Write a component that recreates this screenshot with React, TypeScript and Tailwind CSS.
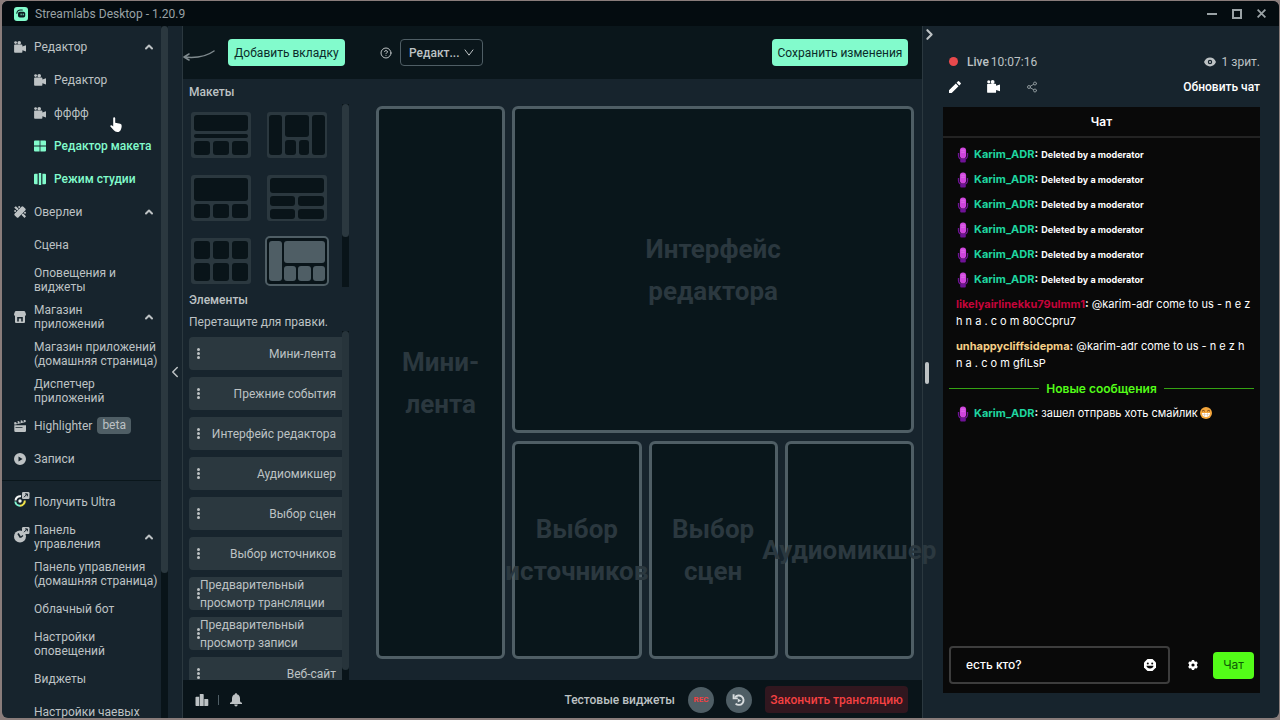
import { useState } from 'react';
import type { ReactNode } from 'react';
import { ChevronLeft, ChevronRight, ChevronUp, CircleHelp, Share2 } from 'lucide-react';

type IconProps = { className?: string };

// Icons
function CameraIcon({ className = 'size-3' }: IconProps) {
  return (
    <svg className={className} viewBox="0 0 12 12" fill="currentColor">
      <circle cx="1.6" cy="1.6" r="1.4" />
      <circle cx="5.2" cy="1.8" r="1.8" />
      <path d="M1 3.4h6.600q.8 0 .8.800v1.200L12 4.200v6.200L8.400 9.200v1.800q0 .8-.8.8H1q-.9 0-.9-.8V4.200q0-.8.9-.8z" />
    </svg>
  );
}

function GridIcon({ className = 'size-3' }: IconProps) {
  return (
    <svg className={className} viewBox="0 0 12 12" fill="currentColor">
      <path d="M1 .5h4.6v5H0V1.4Q0 .5 1 .5zM6.4.5H11q1 0 1 .9v4.1H6.4zM0 6.5h5.6v5H1q-1 0-1-.9zM6.4 6.5H12v4.1q0 .9-1 .9H6.4z" />
    </svg>
  );
}

function StudioIcon({ className = 'size-3' }: IconProps) {
  return (
    <svg className={className} viewBox="0 0 12 12" fill="currentColor">
      <path d="M1 .8h2.600v10.400H1q-1 0-1-1V1.8q0-1 1-1zM4.800 0h2.400v12H4.800zM8.400.8H11q1 0 1 1v8.400q0 1-1 1H8.400z" />
    </svg>
  );
}

function OverlaysIcon({ className = 'size-3' }: IconProps) {
  return (
    <svg className={className} viewBox="0 0 12 12" fill="currentColor">
      <path d="M7.400.8q1-1 2 0l1.800 1.800q1 1 0 2l-6.600 6.600q-1 1-2 0L.8 9.400q-1-1 0-2z" />
      <path d="M.2 1.600 1.900.2 4.800 3 3.200 4.600zM7.400 8.800l1.600-1.500 3 3-1.500 1.600z" />
      <circle cx="1.100" cy="5" r="1" />
      <circle cx="5.200" cy="1" r="1" />
      <circle cx="11" cy="6.800" r="1" />
    </svg>
  );
}

function StoreIcon({ className = 'size-3' }: IconProps) {
  return (
    <svg className={className} viewBox="0 0 12 12" fill="currentColor">
      <path
        fillRule="evenodd"
        d="M2 0h8q.8 0 1.100.8L12 3.200q0 1.400-1 1.700v6q0 1.100-1.100 1.100H2.100Q1 12 1 10.900v-6Q0 4.600 0 3.200L.9.800Q1.200 0 2 0zM3.200 6v4.500h1.600V7.500h2.400v3h1.600V6z"
      />
    </svg>
  );
}

function ClapperIcon({ className = 'size-3' }: IconProps) {
  return (
    <svg className={className} viewBox="0 0 12 12" fill="currentColor">
      <path d="M0 2.600 2 2l.8 1.600 1.300-.4-.8-1.600L5 1.100l.8 1.600 1.300-.4-.8-1.600L8 .3l.8 1.500 1.300-.4L9.500.1 11.500 0l.3 2L.5 4.800z" />
      <path d="M.3 5.200H12v5.600q0 1.200-1.200 1.200H1.500Q.3 12 .3 10.800zM1.500 7.300v.7h7v-.7z" fillRule="evenodd" />
    </svg>
  );
}

function PlayIcon({ className = 'size-3' }: IconProps) {
  return (
    <svg className={className} viewBox="0 0 12 12" fill="currentColor">
      <path d="M6 0a6 6 0 1 1 0 12A6 6 0 0 1 6 0zM4.500 3.400v5.200L8.600 6z" fillRule="evenodd" />
    </svg>
  );
}

function ExternalBadge() {
  return (
    <>
      <rect x="8" y="0" width="7.500" height="7" rx="1.200" fill="#bdc2c4" />
      <path d="M10 5.200 13.200 2M11 1.900h2.400v2.400" stroke="#17242d" strokeWidth="1" fill="none" />
    </>
  );
}

function UltraIcon() {
  return (
    <svg className="mb-1 h-4 w-4 shrink-0" viewBox="0 0 16 16" fill="none">
      <path d="M1.500 8.500A4.600 4.600 0 0 1 7 4.300" stroke="#f4f6f6" strokeWidth="2" />
      <path d="M1.300 9.500A4.700 4.700 0 0 0 6 13.700" stroke="#80f5d2" strokeWidth="2" />
      <path d="M6 13.700A4.800 4.800 0 0 0 10.800 8.500" stroke="#f1e24a" strokeWidth="2" />
      <circle cx="6" cy="9" r="1.700" fill="#f4f6f6" />
      <ExternalBadge />
    </svg>
  );
}

function DashboardIcon() {
  return (
    <svg className="mb-1 h-4 w-4 shrink-0" viewBox="0 0 16 16" fill="none">
      <circle cx="6" cy="9.500" r="6" fill="#bdc2c4" />
      <path d="M6.500 10.500 4 6.500" stroke="#17242d" strokeWidth="1.600" />
      <path d="M6.500 10.500 9 8.500" stroke="#17242d" strokeWidth="1.200" />
      <ExternalBadge />
    </svg>
  );
}

function LogoIcon() {
  return (
    <svg className="size-[14px]" viewBox="0 0 14 14">
      <rect width="14" height="14" rx="3" fill="#82fbcc" />
      <path d="M2.800 6.300Q3.200 3 6.500 3h1.800" stroke="#0b1b20" strokeWidth="1.100" fill="none" strokeLinecap="round" />
      <rect x="4" y="4.700" width="7.200" height="5.800" rx="1.800" fill="#0b1b20" />
      <rect x="6.600" y="6.600" width="1" height="1.700" fill="#82fbcc" />
      <rect x="8.700" y="6.600" width="1" height="1.700" fill="#82fbcc" />
    </svg>
  );
}

function MicIcon() {
  return (
    <svg className="h-4 w-3 shrink-0" viewBox="0 0 12 16">
      <path d="M1.500 6v2.700Q1.700 12.300 6 12.300t4.500-3.600V6" fill="none" stroke="#6f1296" strokeWidth="1.300" />
      <rect x="3.200" y="12" width="5.600" height="3.600" rx="1" fill="#6f1296" />
      <rect x="2.900" y=".5" width="6.200" height="11" rx="3.100" fill="#cf45dd" />
      <path d="M4.200 3.200h3.600M4.200 5.200h3.600" stroke="#e47bee" strokeWidth=".8" />
    </svg>
  );
}

// Sidebar
type NavItem = {
  label: string;
  icon?: ReactNode;
  sub?: boolean;
  open?: boolean;
  active?: boolean;
  badge?: string;
};

const mainNav: NavItem[] = [
  { label: 'Редактор', icon: <CameraIcon />, open: true },
  { label: 'Редактор', icon: <CameraIcon />, sub: true },
  { label: 'фффф', icon: <CameraIcon />, sub: true },
  { label: 'Редактор макета', icon: <GridIcon />, sub: true, active: true },
  { label: 'Режим студии', icon: <StudioIcon />, sub: true, active: true },
  { label: 'Оверлеи', icon: <OverlaysIcon />, open: true },
  { label: 'Сцена', sub: true },
  { label: 'Оповещения и\nвиджеты', sub: true },
  { label: 'Магазин\nприложений', icon: <StoreIcon />, open: true },
  { label: 'Магазин приложений\n(домашняя страница)', sub: true },
  { label: 'Диспетчер\nприложений', sub: true },
  { label: 'Highlighter', icon: <ClapperIcon />, badge: 'beta' },
  { label: 'Записи', icon: <PlayIcon /> },
];

const accountNav: NavItem[] = [
  { label: 'Получить Ultra', icon: <UltraIcon /> },
  { label: 'Панель\nуправления', icon: <DashboardIcon />, open: true },
  { label: 'Панель управления\n(домашняя страница)', sub: true },
  { label: 'Облачный бот', sub: true },
  { label: 'Настройки\nоповещений', sub: true },
  { label: 'Виджеты', sub: true },
  { label: 'Настройки чаевых', sub: true },
];

function NavList({ items }: { items: NavItem[] }) {
  return (
    <ul>
      {items.map((item, i) => (
        <li
          key={i}
          className={`flex items-center pr-[6px] ${item.sub ? 'pl-8' : 'pl-3'} ${
            item.label.includes('\n') ? 'h-[37px]' : 'h-[33px]'
          }`}
        >
          <a href="#" className={`flex min-w-0 items-center ${item.active ? 'font-medium text-[#82fbcc]' : ''}`}>
            {item.icon && <span className="w-5 shrink-0">{item.icon}</span>}
            <span className="whitespace-pre leading-[14px]">{item.label}</span>
          </a>
          {item.badge && (
            <span className="ml-[5px] rounded bg-[#4f5e65] px-[5px] leading-[17px]">{item.badge}</span>
          )}
          {item.open && (
            <button aria-label="Свернуть" className="ml-auto">
              <ChevronUp className="size-3" strokeWidth={4} />
            </button>
          )}
        </li>
      ))}
    </ul>
  );
}

function Sidebar() {
  return (
    <aside className="flex shrink-0 border-r border-[#2b383f]">
      <nav className="w-[159px] overflow-hidden pt-1">
        <NavList items={mainNav} />
        <hr className="mb-1 mt-[5px] border-[#0a161b]" />
        <NavList items={accountNav} />
      </nav>
      <div className="w-[7px] bg-[#091419]">
        <div className="h-[79%] rounded bg-[#2b383f]" />
      </div>
      <button aria-label="Скрыть меню" className="flex w-[14px] items-center justify-center">
        <ChevronLeft className="size-[18px] shrink-0" strokeWidth={2} />
      </button>
    </aside>
  );
}

// Layout thumbnails, each rect is [x, y, width, height] on a 60x46 board
const layouts: number[][][] = [
  [[3, 3, 54, 16], [3, 22, 54, 4], [3, 29, 16, 14], [22, 29, 16, 14], [41, 29, 16, 14]],
  [[2, 3, 13, 40], [18, 3, 24, 22], [18, 28, 11, 15], [32, 28, 10, 15], [45, 3, 13, 40]],
  [[3, 3, 54, 23], [3, 29, 16, 14], [22, 29, 16, 14], [41, 29, 16, 14]],
  [[3, 3, 54, 15], [3, 21, 25, 10], [31, 21, 26, 10], [3, 34, 25, 10], [31, 34, 26, 10]],
  [[3, 3, 16, 18], [22, 3, 16, 18], [41, 3, 16, 18], [3, 25, 16, 18], [22, 25, 16, 18], [41, 25, 16, 18]],
  [[2, 3, 13, 40], [17, 3, 41, 22], [17, 28, 12, 15], [31, 28, 13, 15], [46, 28, 12, 15]],
];

function LayoutThumb({ rects, selected, onClick }: { rects: number[][]; selected: boolean; onClick: () => void }) {
  return (
    <button onClick={onClick} aria-label="Макет" aria-pressed={selected} className="h-[50px] w-16">
      <svg className="h-full w-full" viewBox="-2 -2 64 50">
        {selected ? (
          <rect x="-1" y="-1" width="62" height="48" rx="4" fill="#091419" stroke="#4f5e65" strokeWidth="2" />
        ) : (
          <rect width="60" height="46" rx="3" fill="#2b383f" />
        )}
        {rects.map(([x, y, w, h], i) => (
          <rect key={i} x={x} y={y} width={w} height={h} rx={Math.min(3, h / 2)} fill={selected ? '#4f5e65' : '#091419'} />
        ))}
      </svg>
    </button>
  );
}

const elements = [
  'Мини-лента',
  'Прежние события',
  'Интерфейс редактора',
  'Аудиомикшер',
  'Выбор сцен',
  'Выбор источников',
  'Предварительный просмотр трансляции',
  'Предварительный просмотр записи',
  'Веб-сайт',
];

function ElementsPanel() {
  const [selected, setSelected] = useState(5);

  return (
    <div className="flex w-[166px] shrink-0 flex-col overflow-hidden pt-[5px]">
      <h2 className="pl-[6px] font-medium leading-4">Макеты</h2>
      <div className="mt-1 flex h-[183px] shrink-0">
        <div className="grid flex-1 grid-cols-[64px_64px] content-start gap-x-3 gap-y-[13px] pl-[6px] pt-[6px]">
          {layouts.map((rects, i) => (
            <LayoutThumb key={i} rects={rects} selected={i === selected} onClick={() => setSelected(i)} />
          ))}
        </div>
        <div className="w-[7px] bg-[#091419]">
          <div className="h-[133px] rounded bg-[#2b383f]" />
        </div>
      </div>
      <h2 className="mt-[5px] pl-[6px] font-medium leading-4">Элементы</h2>
      <p className="mb-px mt-[6px] pl-[6px] leading-4">Перетащите для правки.</p>
      <div className="flex min-h-0 flex-1">
        <ul className="flex flex-1 flex-col gap-[7px] pl-[6px] pt-[6px]">
          {elements.map((name) => (
            <li key={name} className="flex h-[33px] shrink-0 cursor-grab items-center justify-between rounded-l bg-[#2b383f] pl-2 pr-[6px]">
              <span className="flex w-[3px] shrink-0 flex-col gap-px">
                <i className="size-[3px] rounded-full bg-[#bdc2c4]" />
                <i className="size-[3px] rounded-full bg-[#bdc2c4]" />
                <i className="size-[3px] rounded-full bg-[#bdc2c4]" />
              </span>
              <span className="leading-[18px]">{name}</span>
            </li>
          ))}
        </ul>
        <div className="w-[7px] bg-[#091419]">
          <div className="h-[97%] rounded bg-[#27343b]" />
        </div>
      </div>
    </div>
  );
}

function Cell({ label, className = '' }: { label: string; className?: string }) {
  return (
    <div
      className={`flex min-w-0 items-center justify-center rounded-md border-[3px] border-[#4f5e65] bg-[#09161b] text-center text-[26px] font-bold leading-[42px] text-[#2b383f] ${className}`}
    >
      <span>{label}</span>
    </div>
  );
}

function LayoutEditor() {
  return (
    <main className="relative z-10 flex min-w-0 flex-1 flex-col">
      <header className="flex h-[53px] shrink-0 items-center bg-[#0a161b] pr-[14px]">
        <svg className="h-4 w-8" viewBox="0 0 32 16" fill="none" stroke="#7e898d" strokeWidth="1.500" strokeLinecap="round">
          <path d="M31 6Q20 14 1 12M1 12l5-3M1 12l5 3" />
        </svg>
        <button className="ml-[13px] h-[27px] w-[117px] rounded bg-[#82fbcc] text-[#0b2b2a]">Добавить вкладку</button>
        <CircleHelp className="ml-[35px] size-3" strokeWidth={2} />
        <div className="relative ml-2">
          <select
            aria-label="Вкладка"
            className="h-[27px] w-[83px] appearance-none rounded border border-[#4f5e65] bg-transparent pl-2 font-medium"
          >
            <option>Редакт...</option>
          </select>
          <svg
            className="pointer-events-none absolute right-[9px] top-[10px] h-[7px] w-[10px]"
            viewBox="0 0 10 7"
            fill="none"
            stroke="currentColor"
          >
            <path d="M.8.600 5 6.200 9.200.6" />
          </svg>
        </div>
        <button className="ml-auto h-[27px] w-[136px] rounded bg-[#82fbcc] text-[#0b2b2a]">Сохранить изменения</button>
      </header>
      <div className="flex min-h-0 flex-1">
        <ElementsPanel />
        <div className="grid min-w-0 flex-1 grid-cols-4 grid-rows-[3fr_2fr] gap-x-[7px] gap-y-2 pb-[21px] pl-[27px] pr-2 pt-[27px]">
          <Cell label="Мини-лента" className="row-span-2" />
          <Cell label="Интерфейс редактора" className="col-span-3 px-[120px]" />
          <Cell label="Выбор источников" />
          <Cell label="Выбор сцен" />
          <Cell label="Аудиомикшер" />
        </div>
      </div>
      <footer className="flex h-[38px] shrink-0 items-center bg-[#091419] pl-3 pr-[14px] pt-px">
        <button aria-label="Статистика">
          <svg className="h-3 w-[14px]" viewBox="0 0 14 12" fill="currentColor">
            <path d="M1.200 2.800h3V12h-3q-.7 0-.7-.8V3.600q0-.8.700-.8zM4.800 0h3.200q.7 0 .7.700V12H4.800zM9.300 5h3.200q.8 0 .8.800v5.400q0 .8-.8.8H9.300z" />
          </svg>
        </button>
        <span className="mx-[9px] h-[10px] w-px bg-[#4f5e65]" />
        <button aria-label="Уведомления" className="ml-px">
          <svg className="size-[14px]" viewBox="0 0 14 14" fill="currentColor">
            <path d="M7 0q.9 0 .9 1.200Q11 2 11 5.500V8q.3 1.400 2 1.800v1.100H1V9.800Q2.700 9.400 3 8V5.500Q3 2 6.100 1.200 6.100 0 7 0zM5.200 11.500h3.600Q8.500 13.400 7 13.400t-1.800-1.900z" />
          </svg>
        </button>
        <button className="ml-auto font-medium">Тестовые виджеты</button>
        <button className="ml-[13px] size-[26px] rounded-full bg-[#4f5e65] text-[8px] font-bold text-[#f44142]">REC</button>
        <button aria-label="Повтор" className="ml-3 flex size-[26px] items-center justify-center rounded-full bg-[#4f5e65] text-[#d8dcde]">
          <svg className="size-[14px]" viewBox="0 0 14 14" fill="none" stroke="currentColor" strokeWidth="1.900">
            <path d="M3 4.500A4.700 4.700 0 1 1 3.600 10.600" />
            <path d="M1.600 1.200v4.200h4.200" />
            <path d="M5.800 5.500v4L9.200 7.500z" fill="currentColor" stroke="none" />
          </svg>
        </button>
        <button className="ml-[13px] h-[27px] w-[143px] whitespace-nowrap rounded bg-[#31171f] font-medium text-[#f44142]">
          Закончить трансляцию
        </button>
      </footer>
    </main>
  );
}

// Chat
type Message = { user: string; color: string; text: string; host?: boolean; deleted?: boolean; emoji?: boolean };

const deleted: Message = {
  user: 'Karim_ADR',
  color: 'text-[#1fd6a0]',
  text: 'Deleted by a moderator',
  host: true,
  deleted: true,
};

const messages: Message[] = [
  deleted,
  deleted,
  deleted,
  deleted,
  deleted,
  deleted,
  { user: 'likelyairlinekku79ulmm1', color: 'text-[#c4043a]', text: '@karim-adr come to us - n e z h n a . c o m 80CCpru7' },
  { user: 'unhappycliffsidepma', color: 'text-[#f5cf87]', text: '@karim-adr come to us - n e z h n a . c o m gfILsP' },
];

const newMessages: Message[] = [
  { user: 'Karim_ADR', color: 'text-[#1fd6a0]', text: 'зашел отправь хоть смайлик', host: true, emoji: true },
];

function ChatMessage({ message }: { message: Message }) {
  return (
    <li className="flex items-center py-1 pl-[13px] pr-[7px] text-[11px] leading-[17px]">
      {message.host && (
        <span className="mr-[5px] flex h-[17px] items-center pl-px">
          <MicIcon />
        </span>
      )}
      <p className="min-w-0">
        <span className={`font-bold ${message.color}`}>{message.user}</span>
        <span className="font-bold">:</span>{' '}
        <span className={message.deleted ? 'text-[9px] font-bold leading-none' : ''}>{message.text}</span>
        {message.emoji && (
          <svg className="ml-[2px] inline size-3 align-[-2px]" viewBox="0 0 12 12">
            <circle cx="6" cy="6" r="6" fill="#f4a63c" />
            <path d="M2 4.200q1.400-1.500 2.800 0M7.200 4.200q1.400-1.500 2.800 0" stroke="#6b3a12" strokeWidth="1" fill="none" />
            <path d="M2 6h8q0 4-4 4T2 6z" fill="#fff" />
            <path d="M2.300 7.700h7.400M4.500 6v3.500M7.500 6v3.500" stroke="#c9a27a" strokeWidth=".4" />
          </svg>
        )}
      </p>
    </li>
  );
}

function Chat() {
  const [draft, setDraft] = useState('есть кто?');

  return (
    <section className="mt-3 flex min-h-0 flex-1 flex-col bg-[#090909] font-['Inter',sans-serif] text-[12px] text-white">
      <h2 className="flex h-[31px] shrink-0 items-center justify-center border-b-2 border-[#232323] font-semibold">
        Чат
      </h2>
      <div className="min-h-0 flex-1 overflow-hidden pt-1">
        <ul>
          {messages.map((message, i) => (
            <ChatMessage key={i} message={message} />
          ))}
        </ul>
        <div className="mx-[6px] flex h-[25px] items-center gap-[7px] font-semibold text-[#53fc18]">
          <span className="h-px flex-1 bg-[#35a313]" />
          Новые сообщения
          <span className="h-px flex-1 bg-[#35a313]" />
        </div>
        <ul>
          {newMessages.map((message, i) => (
            <ChatMessage key={i} message={message} />
          ))}
        </ul>
      </div>
      <form className="flex shrink-0 items-center px-[6px] pb-[9px]" onSubmit={(e) => e.preventDefault()}>
        <div className="flex h-[38px] min-w-0 flex-1 items-center rounded-sm border-2 border-[#3d3d3d] pl-[15px] pr-3">
          <input
            aria-label="Сообщение"
            className="min-w-0 flex-1 bg-transparent font-medium outline-none"
            value={draft}
            onChange={(e) => setDraft(e.target.value)}
          />
          <button type="button" aria-label="Эмодзи">
            <svg className="size-3" viewBox="0 0 12 12">
              <path d="M3.500 0h5L12 3.500v5L8.500 12h-5L0 8.500v-5z" fill="#fff" />
              <circle cx="3.800" cy="4.500" r="1" fill="#090909" />
              <circle cx="8.200" cy="4.500" r="1" fill="#090909" />
              <path d="M2.500 6.700h7q-.5 2.700-3.500 2.700T2.500 6.700z" fill="#090909" />
            </svg>
          </button>
        </div>
        <button type="button" aria-label="Настройки чата" className="ml-[18px] mr-[15px]">
          <svg className="size-[10px]" viewBox="0 0 10 10" fill="#fff">
            <path
              fillRule="evenodd"
              d="M3.900 0h2.200l.3 1.200 1 .6 1.300-.4 1.100 1.900-.9.900v1.600l.9.900-1.100 1.900-1.300-.4-1 .6-.3 1.200H3.900l-.3-1.200-1-.6-1.300.4L.2 6.700l.9-.9V4.200l-.9-.9 1.100-1.900 1.300.4 1-.6zM5 3.400a1.600 1.600 0 1 0 0 3.200 1.600 1.600 0 0 0 0-3.200z"
            />
          </svg>
        </button>
        <button className="h-[27px] w-[41px] rounded bg-[#53fc18] text-[#0d5a06]">Чат</button>
      </form>
    </section>
  );
}

function LivePanel() {
  return (
    <aside className="flex w-[357px] shrink-0 border-l border-[#2b383f]">
      <div className="flex w-5 shrink-0 flex-col items-center">
        <button aria-label="Скрыть чат" className="-ml-2 h-4">
          <ChevronRight className="size-[17px]" strokeWidth={3} />
        </button>
        <span className="mb-auto mr-[13px] mt-auto h-[22px] w-1 rounded-full bg-[#bdc2c4]" />
        <span className="h-[14px]" />
      </div>
      <div className="flex min-w-0 flex-1 flex-col pb-[25px] pr-[19px] pt-[27px]">
        <div className="flex h-[17px] shrink-0 items-center pl-[6px]">
          <span className="size-[9px] rounded-full bg-[#e8494c]" />
          <span className="ml-[9px] font-medium">Live</span>
          <span className="ml-[2px]">10:07:16</span>
          <svg className="ml-auto h-[10px] w-3" viewBox="0 0 12 10" fill="currentColor">
            <path fillRule="evenodd" d="M6 .6q4 0 6 4.400-2 4.400-6 4.400T0 5Q2 .6 6 .6zM6 2.800a2.200 2.200 0 1 0 0 4.400 2.200 2.200 0 0 0 0-4.400z" />
            <circle cx="6" cy="5" r="1" />
          </svg>
          <span className="ml-[6px]">1 зрит.</span>
        </div>
        <div className="mt-2 flex h-[17px] shrink-0 items-center pl-[6px] text-white">
          <button aria-label="Изменить">
            <svg className="size-3" viewBox="0 0 12 12" fill="currentColor">
              <path d="M0 9.300 6.800 2.500 9.500 5.200 2.700 12H0zM7.600 1.700 9 .3q.5-.5 1 0L11.700 2q.5.500 0 1l-1.400 1.400z" />
            </svg>
          </button>
          <button aria-label="Камера" className="ml-[26px]">
            <CameraIcon className="size-[13px]" />
          </button>
          <button aria-label="Поделиться" className="ml-[26px] text-[#8b9599]">
            <Share2 className="size-3" strokeWidth={2} />
          </button>
          <button className="ml-auto font-medium">Обновить чат</button>
        </div>
        <Chat />
      </div>
    </aside>
  );
}

export default function App() {
  return (
    <div className="h-screen overflow-hidden bg-[#8a7d7b] pb-[2px] pl-[2px] pr-px pt-px">
      <div className="relative flex h-full flex-col overflow-hidden rounded-md bg-[#17242d] font-['Roboto',sans-serif] text-[12px] text-[#bdc2c4]">
        <header className="flex h-[25px] shrink-0 items-center bg-[#040c10] pl-3 pr-[13px] text-[#9aa2a5]">
          <LogoIcon />
          <h1 className="ml-[7px]">Streamlabs Desktop - 1.20.9</h1>
          <div className="ml-auto flex items-center gap-[15px]">
            <button aria-label="Свернуть окно" className="flex h-3 w-[10px] items-center">
              <span className="h-[2px] w-full bg-[#9aa2a5]" />
            </button>
            <button aria-label="Развернуть окно" className="size-[10px] border-2 border-[#9aa2a5]" />
            <button aria-label="Закрыть окно">
              <svg className="size-[9px]" viewBox="0 0 9 9" stroke="currentColor" strokeWidth="1.800">
                <path d="M.6.6l7.800 7.800M8.400.6.6 8.400" />
              </svg>
            </button>
          </div>
        </header>
        <div className="flex min-h-0 flex-1">
          <Sidebar />
          <LayoutEditor />
          <LivePanel />
        </div>
        {/* pointer */}
        <svg className="pointer-events-none absolute left-[108px] top-[116px] h-4 w-3" viewBox="0 0 12 16" fill="#fff">
          <path d="M3.200 1.300q0-1.100 1-1.100t1 1.100v4.500l5 .9q1.600.4 1.500 2.200-.1 2-.7 3.300-.8 2.800-3.700 2.800-2.200 0-3.500-1.800L.4 9.600Q0 8.600.9 8.300q.9-.2 2.300 1.200z" />
        </svg>
      </div>
    </div>
  );
}
